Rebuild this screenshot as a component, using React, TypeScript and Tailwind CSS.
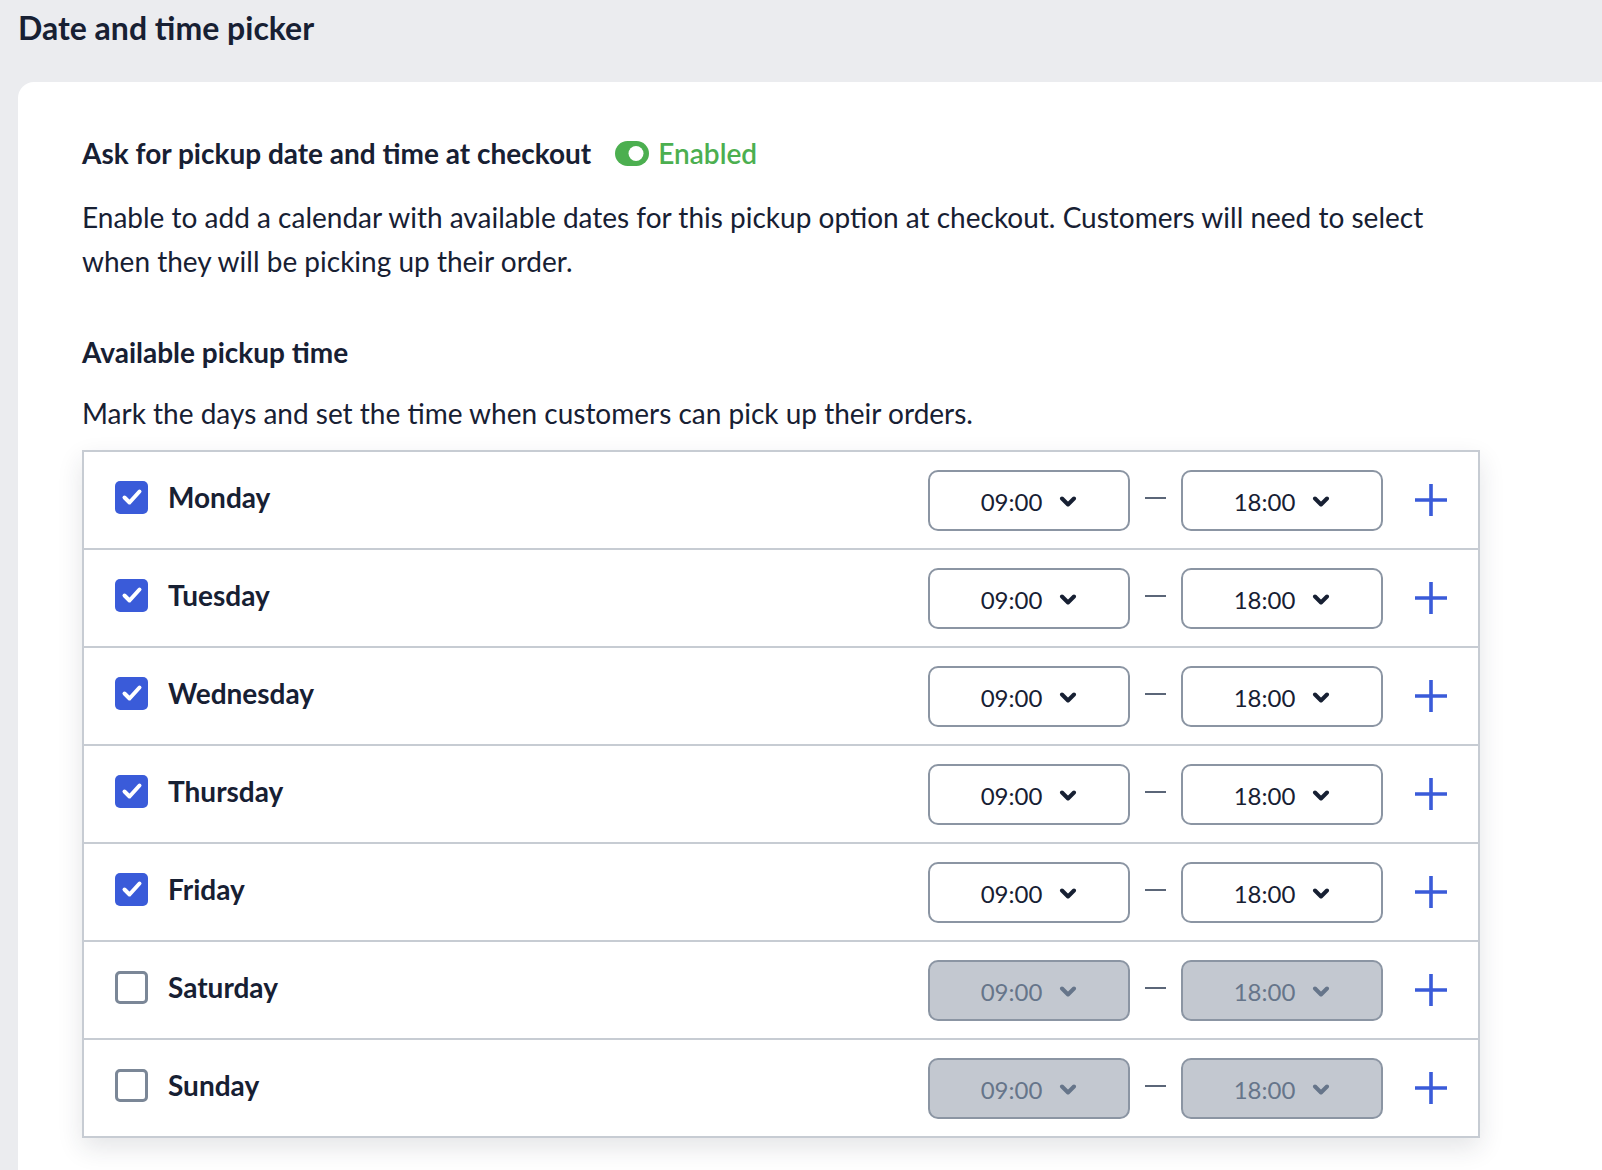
import React, { useState } from 'react';

type Day = { name: string; enabled: boolean; from: string; to: string };

const initialDays: Day[] = [
    { name: 'Monday', enabled: true, from: '09:00', to: '18:00' },
    { name: 'Tuesday', enabled: true, from: '09:00', to: '18:00' },
    { name: 'Wednesday', enabled: true, from: '09:00', to: '18:00' },
    { name: 'Thursday', enabled: true, from: '09:00', to: '18:00' },
    { name: 'Friday', enabled: true, from: '09:00', to: '18:00' },
    { name: 'Saturday', enabled: false, from: '09:00', to: '18:00' },
    { name: 'Sunday', enabled: false, from: '09:00', to: '18:00' },
];

const Chevron = () => (
    <svg width="18" height="12" viewBox="0 0 18 12" fill="none">
        <path d="M3 2.5l6 6 6-6" stroke="currentColor" strokeWidth="4" strokeLinecap="round" strokeLinejoin="round" />
    </svg>
);

const Check = () => (
    <svg width="26" height="26" viewBox="0 0 26 26" fill="none">
        <path d="M5.5 13.5l5 5 10-11" stroke="white" strokeWidth="4" strokeLinecap="round" strokeLinejoin="round" />
    </svg>
);

const Plus = () => (
    <svg width="34" height="34" viewBox="0 0 34 34" fill="none">
        <path d="M17 1v32M1 17h32" stroke="#3a5bd9" strokeWidth="3.6" />
    </svg>
);

const ToggleOn = () => (
    <svg width="34" height="25" viewBox="0 0 34 25" fill="none">
        <rect x="0" y="0" width="34" height="25" rx="12.5" fill="#4caf50" />
        <circle cx="21" cy="12.5" r="7.5" fill="white" />
    </svg>
);

const TimeSelect: React.FC<{ value: string; disabled: boolean }> = ({ value, disabled }) => (
    <div
        className={`w-[202px] h-[61px] rounded-[10px] border-2 border-[#8b95a3] flex items-center justify-center gap-[17px] pt-1 ${
            disabled ? 'bg-[#c3c8d0] text-[#66758a]' : 'bg-white text-[#172033]'
        }`}
    >
        <span className="text-[24px]">{value}</span>
        <Chevron />
    </div>
);

export default function App() {
    const [days, setDays] = useState(initialDays);

    const toggleDay = (i: number) => {
        setDays(prev => prev.map((d, idx) => (idx === i ? { ...d, enabled: !d.enabled } : d)));
    };

    return (
        <div className="min-h-[1170px] bg-[#ebecef] text-[#172033] font-['Lato','Liberation_Sans',sans-serif] overflow-hidden">
            <h1 className="pl-[18px] pt-[10px] text-[32px] leading-[36px] font-bold">Date and time picker</h1>
            <div className="mt-[36px] ml-[18px] bg-white rounded-tl-[16px] min-h-[1100px] pl-[64px] pt-[55px]">
                <div className="flex items-center">
                    <h2 className="text-[28px] leading-[32px] font-bold">Ask for pickup date and time at checkout</h2>
                    <div className="ml-[24px] flex items-center gap-[9px] text-[#4caf50]">
                        <ToggleOn />
                        <span className="text-[28px] leading-[32px] font-semibold">Enabled</span>
                    </div>
                </div>
                <p className="mt-[26px] text-[28px] leading-[44px] max-w-[1400px]">
                    Enable to add a calendar with available dates for this pickup option at checkout. Customers will need to select when they will be picking up their order.
                </p>
                <h3 className="mt-[53px] text-[28px] leading-[32px] font-bold">Available pickup time</h3>
                <p className="mt-[27px] text-[28px] leading-[36px]">Mark the days and set the time when customers can pick up their orders.</p>

                <div className="mt-[19px] w-[1398px] border-2 border-[#c7ccd3] bg-white shadow-[0_10px_24px_rgba(30,40,60,0.12)]">
                    {days.map((d, i) => (
                        <div
                            key={d.name}
                            className={`flex items-center pl-[31px] pr-[30px] ${i > 0 ? 'h-[98px] border-t-2 border-[#c7ccd3]' : 'h-[96px]'}`}
                        >
                            <button
                                type="button"
                                onClick={() => toggleDay(i)}
                                className="flex items-center gap-[20px] mb-[6px]"
                            >
                                {d.enabled ? (
                                    <span className="w-[33px] h-[33px] rounded-[5px] bg-[#3a5bd9] flex items-center justify-center">
                                        <Check />
                                    </span>
                                ) : (
                                    <span className="w-[33px] h-[33px] rounded-[5px] border-[3px] border-[#7b8797] bg-white" />
                                )}
                                <span className="text-[28px] font-bold leading-[36px]">{d.name}</span>
                            </button>
                            <div className="ml-auto flex items-center">
                                <TimeSelect value={d.from} disabled={!d.enabled} />
                                <span className="w-[51px] flex justify-center mb-[4px]">
                                    <span className="w-[21px] h-[2px] bg-[#5b6678]" />
                                </span>
                                <TimeSelect value={d.to} disabled={!d.enabled} />
                                <button type="button" className="ml-[31px]">
                                    <Plus />
                                </button>
                            </div>
                        </div>
                    ))}
                </div>
            </div>
        </div>
    );
}
